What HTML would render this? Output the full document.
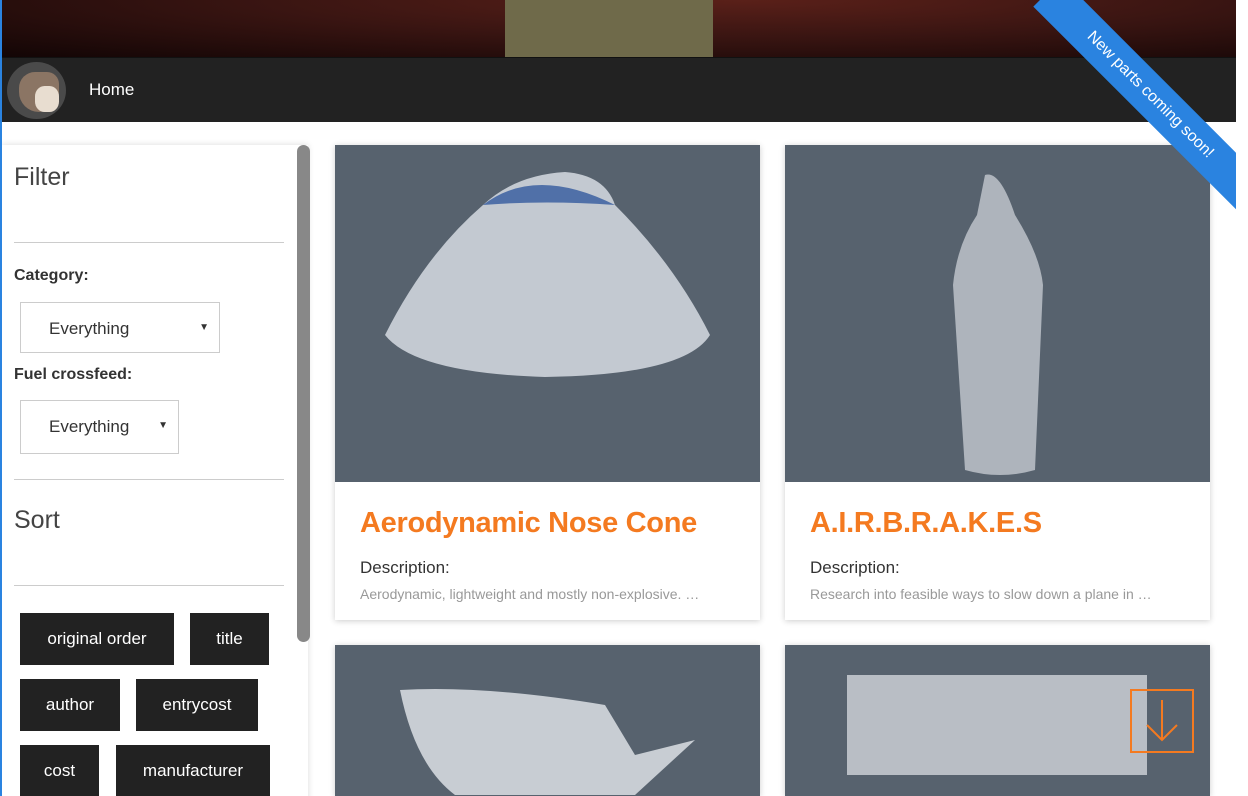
<!DOCTYPE html><html><head><style>
html,body{margin:0;width:1248px;height:796px;overflow:hidden}
body{font-family:"Liberation Sans",sans-serif;background:#fff;position:relative}
.hdr{position:absolute;left:0;top:0;width:1236px;height:57px;background:radial-gradient(ellipse at 60% 0%,#5a2019 0%,#3a1512 45%,#120505 100%)}
.hdr .k{position:absolute;left:505px;top:0;width:208px;height:57px;background:#6f6a4a}
.nav{position:absolute;left:0;top:57px;width:1236px;height:64px;background:#222;border-top:1px solid #111}
.nav .h{position:absolute;left:89px;top:22px;color:#fff;font-size:17px}
.av{position:absolute;left:7px;top:62px;width:59px;height:57px;border-radius:50%;background:#4a4a4a;overflow:hidden}
.av i{position:absolute;left:12px;top:10px;width:40px;height:40px;background:#8b7564;border-radius:40% 30% 50% 50%}
.av b{position:absolute;left:28px;top:24px;width:24px;height:26px;background:#e8ddd0;border-radius:40%}
.lb{position:absolute;left:0;top:0;width:2px;height:796px;background:#2a83e0}
.side{position:absolute;left:2px;top:145px;width:306px;height:660px;background:#fff;box-shadow:0 0 6px rgba(0,0,0,.15)}
.sb{position:absolute;left:297px;top:145px;width:13px;height:497px;background:#888;border-radius:7px}
h2{position:absolute;margin:0;font-weight:300;font-size:25px;color:#444}
hr{position:absolute;left:12px;width:270px;border:0;border-top:1px solid #ccc;margin:0}
.lab{position:absolute;left:12px;font-weight:bold;font-size:16px;color:#333}
.sel{position:absolute;left:18px;height:51px;border:1px solid #ccc;box-sizing:border-box;font-size:17px;color:#333;padding:16px 0 0 28px}
.sel:after{content:"▼";position:absolute;right:10px;top:19px;font-size:10px}
.bt{position:absolute;height:52px;background:#222;color:#fff;font-size:17px;line-height:52px;text-align:center}
.card{position:absolute;width:425px;background:#fff;box-shadow:0 1px 6px rgba(0,0,0,.2)}
.img{position:absolute;left:0;top:0;width:425px;height:337px;background:#57626e}
.t{position:absolute;left:25px;top:362px;color:#f47a20;font-size:29px;font-weight:bold;white-space:nowrap;letter-spacing:-0.3px}
.d{position:absolute;left:25px;top:413px;color:#333;font-size:17px}
.p{position:absolute;left:25px;top:441px;color:#999;font-size:14px;white-space:nowrap}
.rib{position:absolute;left:1005px;top:75px;width:290px;height:40px;background:#2a83e0;color:#fff;font-size:16px;line-height:40px;text-align:center;transform:rotate(45deg);transform-origin:center}
.clip{position:absolute;left:0;top:0;width:1236px;height:796px;overflow:hidden}
.rs{position:absolute;left:1236px;top:0;width:12px;height:796px;background:#fff}
</style></head><body>
<div class="hdr"><div class="k"></div></div>
<div class="nav"><span class="h">Home</span></div>
<div class="av"><i></i><b></b></div>
<div class="side">
<h2 style="left:12px;top:18px">Filter</h2>
<hr style="top:97px">
<div class="lab" style="top:122px">Category:</div>
<div class="sel" style="top:157px;width:200px">Everything</div>
<div class="lab" style="top:221px">Fuel crossfeed:</div>
<div class="sel" style="top:255px;width:159px;height:54px">Everything</div>
<hr style="top:334px">
<h2 style="left:12px;top:361px">Sort</h2>
<hr style="top:440px">
<div class="bt" style="left:18px;top:468px;width:154px">original order</div>
<div class="bt" style="left:188px;top:468px;width:79px">title</div>
<div class="bt" style="left:18px;top:534px;width:100px">author</div>
<div class="bt" style="left:134px;top:534px;width:122px">entrycost</div>
<div class="bt" style="left:18px;top:600px;width:79px">cost</div>
<div class="bt" style="left:114px;top:600px;width:154px">manufacturer</div>
</div>
<div class="sb"></div>
<div class="card" style="left:335px;top:145px;height:475px"><div class="img">
<svg width="425" height="337"><path d="M148 60 Q180 30 230 27 Q270 30 280 60 Q340 120 375 190 Q350 230 210 232 Q80 228 50 190 Q90 110 148 60Z" fill="#c3c9d1"/><path d="M148 60 Q200 20 280 60 Q210 55 148 60Z" fill="#5070a8"/></svg></div>
<div class="t">Aerodynamic Nose Cone</div><div class="d">Description:</div><div class="p">Aerodynamic, lightweight and mostly non-explosive. …</div></div>
<div class="card" style="left:785px;top:145px;height:475px"><div class="img">
<svg width="425" height="337"><path d="M200 30 Q215 25 230 70 Q255 110 258 140 L250 325 Q215 335 180 325 L168 140 Q172 100 192 70Z" fill="#aeb4bc"/></svg></div>
<div class="t">A.I.R.B.R.A.K.E.S</div><div class="d">Description:</div><div class="p">Research into feasible ways to slow down a plane in …</div></div>
<div class="card" style="left:335px;top:645px;height:151px"><div class="img" style="height:151px">
<svg width="425" height="151"><path d="M65 45 Q150 40 270 60 L300 110 Q340 100 360 95 L300 150 L120 150 Q80 120 65 45Z" fill="#c8cdd3"/></svg></div></div>
<div class="card" style="left:785px;top:645px;height:151px"><div class="img" style="height:151px">
<svg width="425" height="151"><rect x="62" y="30" width="300" height="100" fill="#b9bec5"/><rect x="346" y="45" width="62" height="62" fill="none" stroke="#f47a20" stroke-width="2"/><path d="M377 55 V95 M362 80 L377 95 L392 80" stroke="#f47a20" stroke-width="2" fill="none"/></svg></div></div>
<div class="clip"><div class="rib">New parts coming soon!</div></div>
<div class="rs"></div>
<div class="lb"></div>
</body></html>
